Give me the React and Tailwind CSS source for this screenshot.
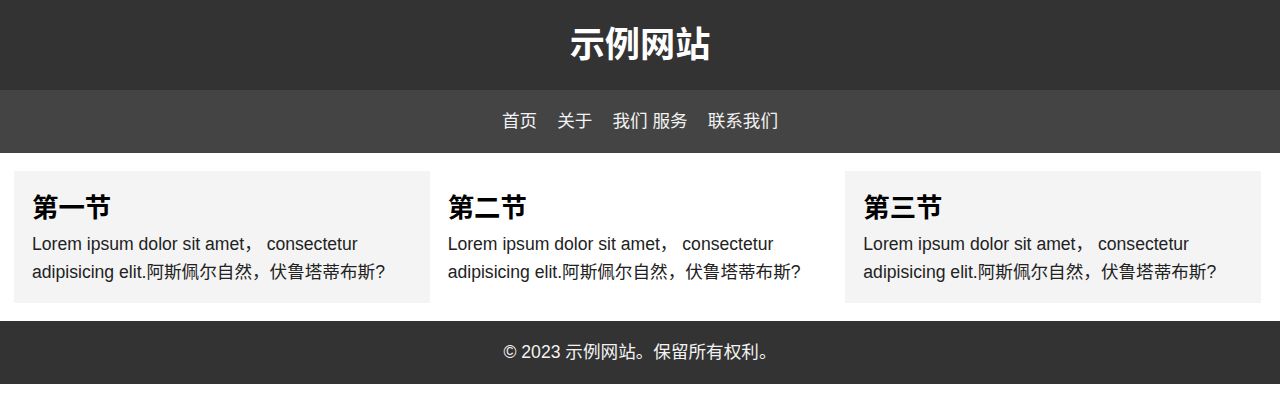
import React from 'react';

const sections = [
    { title: '第一节', bg: 'bg-[#f4f4f4]' },
    { title: '第二节', bg: 'bg-white' },
    { title: '第三节', bg: 'bg-[#f4f4f4]' },
];

const links = ['首页', '关于', '我们 服务', '联系我们'];

export default function App() {
    return (
        <div className="min-h-[419px] bg-white font-['Liberation_Sans','Noto_Sans_CJK_SC',sans-serif]">
            <header className="bg-[#333333] h-[90px] flex items-center justify-center">
                <h1 className="text-white text-[35.2px] font-bold leading-none">示例网站</h1>
            </header>

            <nav className="bg-[#444444] h-[63px] flex items-center justify-center gap-[20px] text-[17.6px] text-[#f2f2f2]">
                {links.map(link => (
                    <a key={link} href="#" className="leading-[27px]">{link}</a>
                ))}
            </nav>

            <main className="grid grid-cols-3 pl-[14px] pr-[19px] py-[18px]">
                {sections.map(s => (
                    <section key={s.title} className={`${s.bg} px-[18px] pt-[18px] pb-[17px]`}>
                        <h2 className="text-[26.4px] font-bold leading-[39px] mb-[2px] text-black">{s.title}</h2>
                        <p className="text-[17.6px] leading-[28px] text-[#222222]">
                            Lorem ipsum dolor sit amet， consectetur adipisicing elit.阿斯佩尔自然，伏鲁塔蒂布斯?
                        </p>
                    </section>
                ))}
            </main>

            <footer className="bg-[#333333] h-[63px] flex items-center justify-center text-[#f2f2f2] text-[17.6px]">
                © 2023 示例网站。保留所有权利。
            </footer>
        </div>
    );
}
